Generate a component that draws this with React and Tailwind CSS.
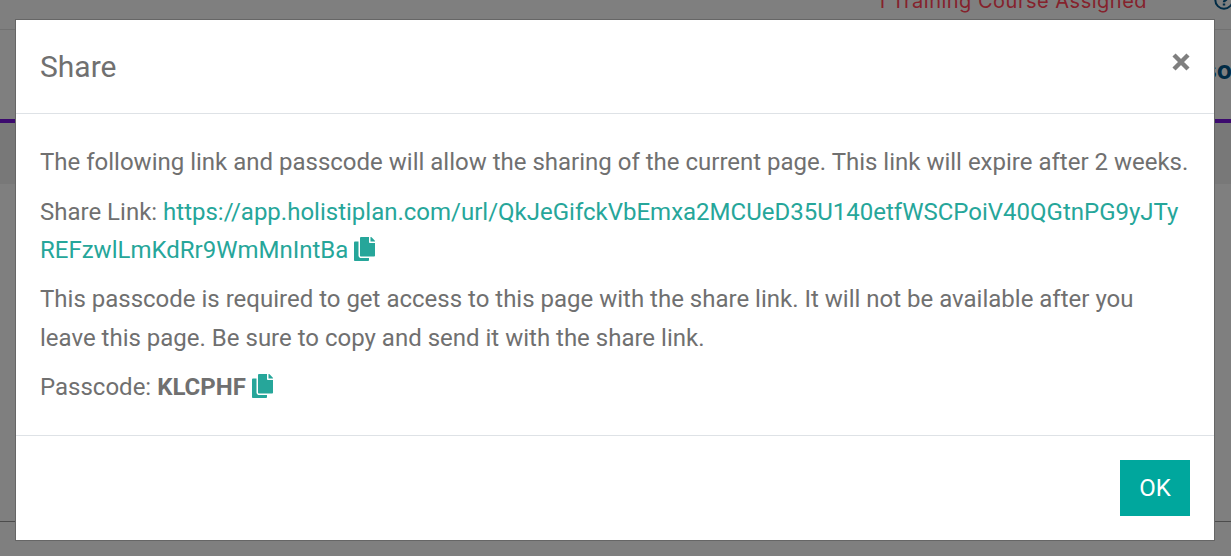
import React from "react";
import { FaCopy } from "react-icons/fa";

const shareUrl =
  "https://app.holistiplan.com/url/QkJeGifckVbEmxa2MCUeD35U140etfWSCPoiV40QGtnPG9yJTyREFzwlLmKdRr9WmMnIntBa";
const passcode = "KLCPHF";

function CopyButton() {
  return (
    <button type="button" className="inline-block align-[-3px] text-[#26a69a]">
      <FaCopy className="block h-6 w-[21px]" />
    </button>
  );
}

// dimmed page that sits behind the modal
function PageBehind() {
  return (
    <div className="flex h-[556px] flex-col overflow-hidden bg-[#7f7f7f] font-['Inter',sans-serif]">
      <div className="flex h-[30px] shrink-0 justify-end overflow-hidden border-b border-[#717171]">
        <span className="-mt-[13px] mr-[67px] h-[28px] w-[270px] whitespace-nowrap text-[20px] leading-[28px] tracking-[0.5px] text-[#85222c]">
          1 Training Course Assigned
        </span>
        <svg viewBox="0 0 20 20" className="-mt-[10px] -mr-[3px] h-5 w-5 shrink-0" fill="none" stroke="#002b45" strokeWidth="2">
          <circle cx="10" cy="10" r="8.7" />
          <path d="M7.3 8a2.7 2.7 0 1 1 3.9 2.4c-.8.4-1.2.8-1.2 1.8M10 13.4v2" strokeWidth="2.4" />
        </svg>
      </div>
      <div className="flex h-[89px] shrink-0 items-center justify-end text-[25px] font-bold text-[#002b45]">
        <span className="-mt-[7px] -mr-px">so</span>
      </div>
      <div className="h-1 shrink-0 bg-[#3c0a6e]" />
      <div className="h-[61px] shrink-0 bg-[#787878]" />
      <div className="h-[338px] shrink-0 border-b border-[#4c4c4c]" />
    </div>
  );
}

function ShareModal() {
  return (
    <div className="absolute top-[19px] left-[15px] flex h-[522px] w-[1200px] flex-col border border-[#666] bg-white font-['Roboto',sans-serif] text-[#707070]">
      <div className="flex h-[94px] shrink-0 justify-between border-b border-[#dee2e6] px-6 pt-6">
        <h5 className="text-[30px] leading-[45px]">Share</h5>
        <button type="button" className="mt-[10px] mr-px h-4 w-4 text-[#7f7f7f]">
          <svg viewBox="0 0 16 16" className="h-4 w-4 overflow-visible" stroke="currentColor" strokeWidth="4.4" strokeLinecap="butt">
            <path d="M1 1l14 14M15 1L1 15" />
          </svg>
        </button>
      </div>
      <div className="flex h-[321px] shrink-0 flex-col gap-[11px] px-6 pt-[29.2px] text-[24px] leading-[38.4px]">
        <p className="whitespace-nowrap">
          The following link and passcode will allow the sharing of the current page. This link will expire after 2 weeks.
        </p>
        <p>
          Share Link: <a className="break-all text-[#26a69a]">{shareUrl}</a> <CopyButton />
        </p>
        <p>
          This passcode is required to get access to this page with the share link. It will not be available after you
          leave this page. Be sure to copy and send it with the share link.
        </p>
        <p>
          Passcode: <b>{passcode}</b> <CopyButton />
        </p>
      </div>
      <div className="flex flex-1 justify-end border-t border-[#dee2e6] px-6 pt-6">
        <button type="button" className="h-14 w-[70px] bg-[#00a79d] text-[24px] text-white">
          OK
        </button>
      </div>
    </div>
  );
}

export default function App() {
  return (
    <div className="relative overflow-hidden">
      <PageBehind />
      <ShareModal />
    </div>
  );
}
